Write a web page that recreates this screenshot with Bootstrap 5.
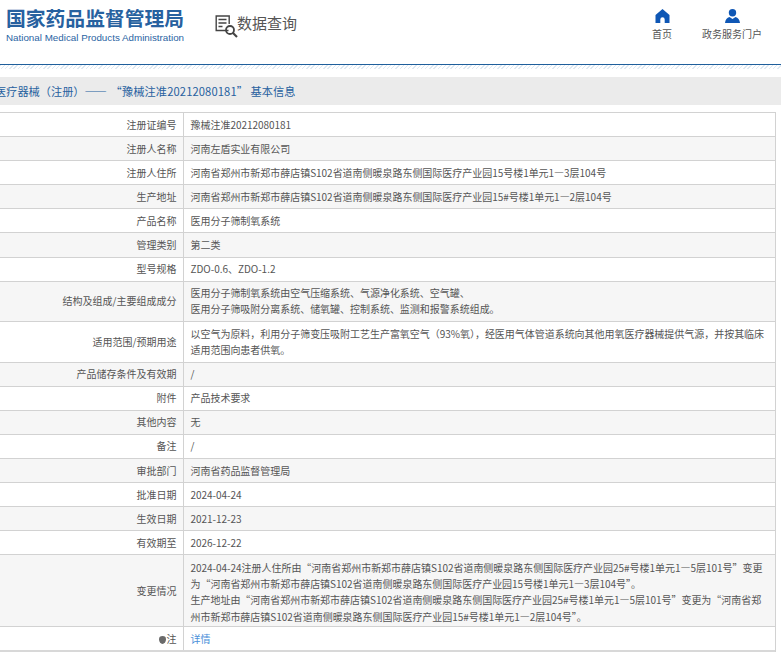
<!DOCTYPE html>
<html lang="zh-CN">
<head>
<meta charset="utf-8">
<title>数据查询</title>
<link rel="stylesheet" href="https://cdn.jsdelivr.net/npm/bootstrap@5.3.0/dist/css/bootstrap.min.css">
<style>
html,body{overflow:hidden;background:#fff}
body{font-family:"Noto Sans CJK SC","Liberation Sans",sans-serif;font-size:10px;color:#555;width:781px;height:657px}
.site-head{height:64px;padding:0 19px 0 6px}
.brand-name{font-size:19.8px;font-weight:700;color:#27619f;line-height:20px;margin-top:8px;white-space:nowrap}
.brand-en{font-family:"Liberation Sans",sans-serif;font-size:9.8px;line-height:12px;color:#2a64a3;margin-top:4px;white-space:nowrap}
.query-box{margin:15px 0 0 31px}
.query-text{font-size:15px;line-height:20px;color:#555;margin-top:-2px;margin-left:-1px}
.head-nav{margin-top:9px;gap:10px;color:#555}
.nav-cell{width:60px;text-align:center;white-space:nowrap}
.nav-cell svg{display:block;margin:0 auto 3px}
.rule-band{height:5px;border-top:1px solid #1f5f9c;background:repeating-linear-gradient(135deg,#dfe9f2 0 1px,#fff 1px 3px)}
.title-bar{margin-top:8px;height:28px;line-height:28px;background:#ebebeb;color:#27619f;font-size:11.2px;white-space:pre;margin-left:-5px}
.title-dash{letter-spacing:1.2px}
.title-code{letter-spacing:.12px}
.spec-wrap{width:776px;margin-top:7px;border-right:1px solid #d2d2d2}
.spec-table{margin:0;table-layout:fixed;width:100%;font-size:10px;--bs-table-color:#555;--bs-table-border-color:#d2d2d2;border-collapse:collapse}
.spec-table th,.spec-table td{padding:3.5px 6px 3.5px 7px;line-height:16.1px;border:0;border-top:1px solid #d2d2d2;font-weight:400;vertical-align:middle;color:#555}
.spec-table td{letter-spacing:-.03px}
.spec-table td.multi-line{line-height:16.25px}
.spec-table td.multi-tall{padding-top:4.5px;padding-bottom:1.5px;line-height:16.2px}
.spec-table tr:last-child>*{border-bottom:2px solid #d8d8d8}
.spec-table th{width:183px;text-align:right;padding-right:6px;border-right:1px solid #d2d2d2}
.spec-table tr:nth-child(even)>*{background:#f6f6f6}
.spec-table a{color:#4a90d9;text-decoration:none}
.tip-dot{display:inline-block;width:7px;height:8px;border-radius:50% 50% 50% 50%/40% 40% 60% 60%;background:#6a6a6a;margin-right:1px;vertical-align:-1px}
</style>
</head>
<body>
<header class="site-head d-flex">
  <div>
    <div class="brand-name">国家药品监督管理局</div>
    <div class="brand-en">National Medical Products Administration</div>
  </div>
  <div class="query-box d-flex">
    <svg width="23" height="23" viewBox="0 0 23 23" fill="none" stroke="#444" stroke-width="1.4"><path d="M13.500 15.500H1.200V1h13v8"/><path d="M3.500 4.500h8M3.500 8h8M3.500 11.500h4"/><circle cx="15" cy="15" r="4" stroke-width="1.800"/><path d="M18 18l4 4" stroke-width="2.200"/></svg>
    <div class="query-text">数据查询</div>
  </div>
  <nav class="head-nav d-flex ms-auto">
    <div class="nav-cell"><svg width="15" height="14" viewBox="0 0 15 14" fill="#0f57b5"><path d="M7.500 0L14.500 6V14H9.700V10.500a2.200 2.200 0 0 0-4.400 0V14H.5V6z"/></svg>首页</div>
    <div class="nav-cell"><svg width="15" height="14" viewBox="0 0 15 14" fill="#0f57b5"><circle cx="7.500" cy="3.700" r="3.700"/><path d="M0 14c.3-3.500 2-5.500 4.500-6l3 2 3-2c2.500.5 4.200 2.500 4.500 6z"/></svg>政务服务门户</div>
  </nav>
</header>
<div class="rule-band"></div>
<div class="title-bar">医疗器械（注册）<span class="title-dash">——</span> <span class="title-code">“豫械注准20212080181”</span> 基本信息</div>
<div class="spec-wrap">
<table class="table spec-table">
<tbody>
<tr><th>注册证编号</th><td>豫械注准20212080181</td></tr>
<tr><th>注册人名称</th><td>河南左盾实业有限公司</td></tr>
<tr><th>注册人住所</th><td>河南省郑州市新郑市薛店镇S102省道南侧暖泉路东侧国际医疗产业园15号楼1单元1—3层104号</td></tr>
<tr><th>生产地址</th><td>河南省郑州市新郑市薛店镇S102省道南侧暖泉路东侧国际医疗产业园15#号楼1单元1—2层104号</td></tr>
<tr><th>产品名称</th><td>医用分子筛制氧系统</td></tr>
<tr><th>管理类别</th><td>第二类</td></tr>
<tr><th>型号规格</th><td>ZDO-0.6、ZDO-1.2</td></tr>
<tr><th>结构及组成/主要组成成分</th><td class="multi-line">医用分子筛制氧系统由空气压缩系统、气源净化系统、空气罐、<br>医用分子筛吸附分离系统、储氧罐、控制系统、监测和报警系统组成。</td></tr>
<tr><th>适用范围/预期用途</th><td class="multi-line">以空气为原料，利用分子筛变压吸附工艺生产富氧空气（93%氧），经医用气体管道系统向其他用氧医疗器械提供气源，并按其临床适用范围向患者供氧。</td></tr>
<tr><th>产品储存条件及有效期</th><td>/</td></tr>
<tr><th>附件</th><td>产品技术要求</td></tr>
<tr><th>其他内容</th><td>无</td></tr>
<tr><th>备注</th><td>/</td></tr>
<tr><th>审批部门</th><td>河南省药品监督管理局</td></tr>
<tr><th>批准日期</th><td>2024-04-24</td></tr>
<tr><th>生效日期</th><td>2021-12-23</td></tr>
<tr><th>有效期至</th><td>2026-12-22</td></tr>
<tr><th>变更情况</th><td class="multi-tall">2024-04-24注册人住所由“河南省郑州市新郑市薛店镇S102省道南侧暖泉路东侧国际医疗产业园25#号楼1单元1—5层101号”变更为“河南省郑州市新郑市薛店镇S102省道南侧暖泉路东侧国际医疗产业园15号楼1单元1—3层104号”。<br>生产地址由“河南省郑州市新郑市薛店镇S102省道南侧暖泉路东侧国际医疗产业园25#号楼1单元1—5层101号”变更为“河南省郑州市新郑市薛店镇S102省道南侧暖泉路东侧国际医疗产业园15#号楼1单元1—2层104号”。</td></tr>
<tr><th><span class="tip-dot"></span>注</th><td><a href="#">详情</a></td></tr>
</tbody>
</table>
</div>
<script src="https://cdn.jsdelivr.net/npm/bootstrap@5.3.0/dist/js/bootstrap.bundle.min.js"></script>
</body>
</html>
